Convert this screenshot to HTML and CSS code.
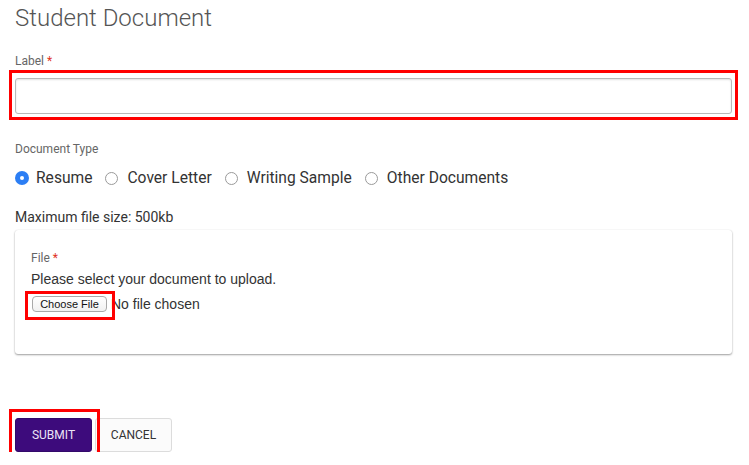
FILE: index.html
```html
<!DOCTYPE html>
<html lang="en">
<head>
<meta charset="utf-8">
<title>Student Document</title>
<link rel="stylesheet" href="styles.css">
</head>
<body>
<main class="page">
  <h1 class="title">Student Document</h1>

  <div class="field field-label">
    <label class="field-name" for="label">Label <span class="req">*</span></label>
    <div class="marked">
      <input class="text-input" id="label" type="text">
      <span class="mark mark-input"></span>
    </div>
  </div>

  <div class="field field-type">
    <div class="field-name">Document Type</div>
    <div class="radios">
      <label class="radio"><span class="dot checked"></span>Resume</label>
      <label class="radio"><span class="dot"></span>Cover Letter</label>
      <label class="radio"><span class="dot"></span>Writing Sample</label>
      <label class="radio"><span class="dot"></span>Other Documents</label>
    </div>
  </div>

  <p class="max-size">Maximum file size: 500kb</p>

  <section class="card">
    <div class="field-name">File <span class="req">*</span></div>
    <p class="hint">Please select your document to upload.</p>
    <div class="file-row">
      <span class="marked">
        <span class="file-btn">Choose File</span>
        <span class="mark mark-file"></span>
      </span>
      <span class="file-status">No file chosen</span>
    </div>
  </section>

  <div class="actions">
    <span class="marked">
      <button class="btn btn-primary" type="button">SUBMIT</button>
      <span class="mark mark-submit"></span>
    </span>
    <button class="btn btn-default" type="button">CANCEL</button>
  </div>
</main>
</body>
</html>
```

FILE: styles.css
```css
* { box-sizing: border-box; }

html, body {
  margin: 0;
  padding: 0;
  background: #ffffff;
}

body {
  font-family: Roboto, "Liberation Sans", Arial, sans-serif;
  color: #333333;
}

.page {
  padding: 0 17px 0 15px;
}

.title {
  margin: 3px 0 0;
  font-size: 24px;
  line-height: 30px;
  font-weight: 300;
  color: #555555;
}

.field-name {
  display: block;
  font-size: 12px;
  line-height: 16px;
  color: #666666;
}

.req {
  color: #e0331f;
}

.field-label {
  margin-top: 20px;
}

.field-label .field-name {
  margin-bottom: 9px;
}

.marked {
  position: relative;
  display: block;
}

span.marked {
  display: inline-block;
}

.mark {
  position: absolute;
  border: 3px solid #ff0000;
  pointer-events: none;
}

.mark-input { left: -6px; right: -6px; top: -8px; bottom: -6px; }
.mark-file { left: -7px; right: -8px; top: -5px; bottom: -8px; }
.mark-submit { left: -6px; right: -8px; top: -9px; bottom: -5px; }

.text-input {
  display: block;
  width: 100%;
  height: 36px;
  margin: 0;
  border: 1px solid #b9b9b9;
  border-radius: 3px;
  box-shadow: inset 0 1px 2px rgba(0, 0, 0, 0.12);
  background: #ffffff;
  font: 14px Roboto, sans-serif;
  padding: 0 8px;
  outline: none;
}

.field-type {
  margin-top: 27px;
}

.radios {
  display: flex;
  align-items: center;
  gap: 13px;
  margin-top: 11px;
  height: 20px;
}

.radio {
  display: flex;
  align-items: center;
  font-size: 15.6px;
  line-height: 20px;
  color: #333333;
}

.dot {
  width: 13px;
  height: 13px;
  border-radius: 50%;
  border: 1px solid #9a9a9a;
  background: #ffffff;
  margin-right: 9px;
  flex: none;
  position: relative;
}

.dot.checked {
  width: 14px;
  height: 14px;
  border: none;
  background: #2c7ef4;
  margin-right: 7px;
}

.dot.checked::after {
  content: "";
  position: absolute;
  left: 5px;
  top: 5px;
  width: 4px;
  height: 4px;
  border-radius: 50%;
  background: #ffffff;
}

.max-size {
  margin: 20px 0 0;
  font-size: 14px;
  line-height: 18px;
  color: #333333;
}

.card {
  margin-top: 4px;
  height: 124px;
  padding: 20px 16px 0;
  border-radius: 3px;
  background: #ffffff;
  box-shadow: 0 1px 2px rgba(0, 0, 0, 0.38), 0 0 1px rgba(0, 0, 0, 0.12);
}

.hint {
  margin: 4px 0 0;
  font-family: "Liberation Sans", Arial, sans-serif;
  font-size: 14px;
  line-height: 18px;
  color: #333333;
}

.file-row {
  display: flex;
  align-items: center;
  height: 20px;
  margin-top: 6px;
  padding-left: 1px;
}

.file-btn {
  display: block;
  width: 75px;
  height: 16px;
  border: 1px solid #a9a9a9;
  border-radius: 4px;
  background: linear-gradient(#ffffff, #f1f1f1);
  font-family: "Liberation Sans", Arial, sans-serif;
  font-size: 11px;
  line-height: 14px;
  text-align: center;
  color: #111111;
}

.file-status {
  margin-left: 4px;
  font-family: "Liberation Sans", Arial, sans-serif;
  font-size: 14px;
  color: #333333;
}

.actions {
  display: flex;
  gap: 3px;
  margin-top: 64px;
}

.btn {
  display: block;
  width: 77px;
  height: 34px;
  margin: 0;
  border-radius: 3px;
  font-family: Roboto, sans-serif;
  font-size: 12px;
  padding: 0;
  cursor: pointer;
}

.btn-primary {
  border: 1px solid #33096a;
  background: #3d0b7c;
  color: #ece4f7;
}

.btn-default {
  border: 1px solid #dcdcdc;
  background: #fbfbfb;
  color: #333333;
}
```
